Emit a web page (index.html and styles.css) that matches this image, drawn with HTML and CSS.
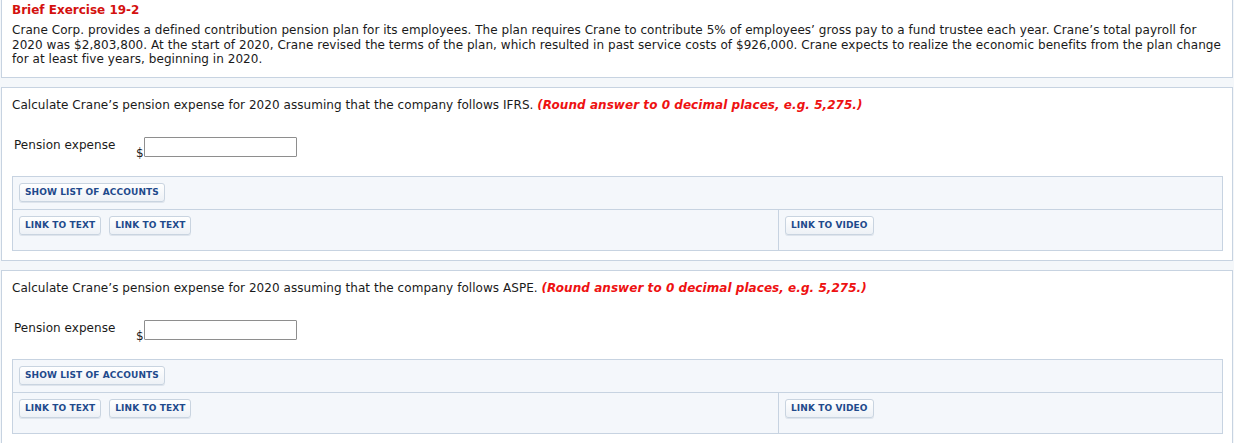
FILE: index.html
```html
<!DOCTYPE html>
<html lang="en">
<head>
<meta charset="utf-8">
<title>Brief Exercise 19-2</title>
<link rel="stylesheet" href="styles.css">
</head>
<body>
<div class="page">
  <section class="box intro">
    <h2 class="title">Brief Exercise 19-2</h2>
    <p class="prose">Crane Corp. provides a defined contribution pension plan for its employees. The plan requires Crane to contribute 5% of employees’ gross pay to a fund trustee each year. Crane’s total payroll for 2020 was $2,803,800. At the start of 2020, Crane revised the terms of the plan, which resulted in past service costs of $926,000. Crane expects to realize the economic benefits from the plan change for at least five years, beginning in 2020.</p>
  </section>

  <section class="box part">
    <p class="question">Calculate Crane’s pension expense for 2020 assuming that the company follows IFRS. <em class="hint">(Round answer to 0 decimal places, e.g. 5,275.)</em></p>
    <div class="answer">
      <span class="label">Pension expense</span>
      <span class="cur">$</span>
      <input class="field" type="text">
    </div>
    <div class="panel">
      <div class="prow">
        <div class="cell"><button class="btn">SHOW LIST OF ACCOUNTS</button></div>
      </div>
      <div class="prow links">
        <div class="cell left"><button class="btn">LINK TO TEXT</button><button class="btn">LINK TO TEXT</button></div>
        <div class="cell right"><button class="btn">LINK TO VIDEO</button></div>
      </div>
    </div>
  </section>

  <section class="box part">
    <p class="question">Calculate Crane’s pension expense for 2020 assuming that the company follows ASPE. <em class="hint">(Round answer to 0 decimal places, e.g. 5,275.)</em></p>
    <div class="answer">
      <span class="label">Pension expense</span>
      <span class="cur">$</span>
      <input class="field" type="text">
    </div>
    <div class="panel">
      <div class="prow">
        <div class="cell"><button class="btn">SHOW LIST OF ACCOUNTS</button></div>
      </div>
      <div class="prow links">
        <div class="cell left"><button class="btn">LINK TO TEXT</button><button class="btn">LINK TO TEXT</button></div>
        <div class="cell right"><button class="btn">LINK TO VIDEO</button></div>
      </div>
    </div>
  </section>
</div>
</body>
</html>
```

FILE: styles.css
```css
html, body {
  margin: 0;
  padding: 0;
  background: #f4f7fa;
}
body {
  font-family: "DejaVu Sans", Verdana, sans-serif;
  font-size: 12px;
  line-height: 15px;
  letter-spacing: 0.05px;
  color: #1a1a1a;
}
.page {
  display: flex;
  flex-direction: column;
  gap: 9px;
  padding: 0 1px 0 1px;
}
.box {
  background: #fff;
  border: 1px solid #c7d3e1;
  margin: 0;
}
.intro {
  border-top: none;
  padding: 3px 8px 10px 10px;
}
.title {
  margin: 0 0 5px 0;
  font-size: 12px;
  line-height: 15px;
  font-weight: bold;
  letter-spacing: 0;
  color: #d4110f;
}
.prose {
  margin: 0;
  line-height: 14.5px;
}
.part {
  padding: 10px 9px 9px 10px;
}
.question {
  margin: 0;
}
.hint {
  color: #ee1111;
  font-weight: bold;
  font-style: italic;
}
.answer {
  display: flex;
  align-items: flex-start;
  margin-top: 24px;
  height: 20px;
}
.label {
  width: 122px;
  padding-left: 2px;
  padding-top: 1px;
}
.cur {
  align-self: flex-end;
  line-height: 12px;
  margin-bottom: -2px;
  width: 8px;
}
.field {
  box-sizing: border-box;
  width: 153px;
  height: 20px;
  margin: 0;
  padding: 0 2px;
  border: 1px solid #8e8e8e;
  border-radius: 1px;
  background: #fff;
  font: inherit;
}
.panel {
  margin-top: 19px;
  border: 1px solid #c7d3e1;
  background: #f4f7fb;
}
.prow {
  display: flex;
}
.prow + .prow {
  border-top: 1px solid #c7d3e1;
}
.cell {
  display: flex;
  gap: 8px;
  padding: 6px 6px 7px 6px;
}
.links .cell {
  padding-bottom: 15px;
}
.cell.left {
  width: 753px;
  border-right: 1px solid #c7d3e1;
}
.cell.right {
  flex: 1;
}
.btn {
  font-family: "DejaVu Sans", Verdana, sans-serif;
  font-size: 9px;
  font-weight: bold;
  letter-spacing: 0.1px;
  color: #1f4a8c;
  height: 19px;
  padding: 0 5px;
  line-height: 17px;
  border: 1px solid #c9d4e0;
  border-radius: 3px;
  background: linear-gradient(#ffffff, #edf1f6);
  box-shadow: 0 1px 0 rgba(200, 210, 222, 0.5);
}
```
